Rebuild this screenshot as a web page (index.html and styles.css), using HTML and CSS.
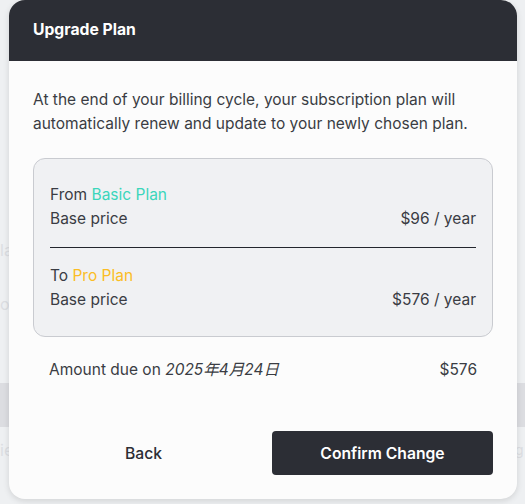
FILE: index.html
```html
<!DOCTYPE html>
<html>
<head>
<meta charset="utf-8">
<link rel="stylesheet" href="styles.css">
</head>
<body>
<div class="backdrop">
  <div class="bg-text bg-t1">la</div>
  <div class="bg-text bg-t2">o</div>
  <div class="bg-band"></div>
  <div class="bg-text bg-t3">ie</div>
  <div class="bg-text bg-t4">g</div>
</div>
<div class="modal">
  <div class="modal-header">Upgrade Plan</div>
  <div class="modal-body">
    <p class="intro">At the end of your billing cycle, your subscription plan will automatically renew and update to your newly chosen plan.</p>
    <div class="summary">
      <div class="plan">
        <div class="row">From <span class="basic">Basic Plan</span></div>
        <div class="row split"><span>Base price</span><span>$96 / year</span></div>
      </div>
      <div class="divider"></div>
      <div class="plan">
        <div class="row">To <span class="pro">Pro Plan</span></div>
        <div class="row split"><span>Base price</span><span>$576 / year</span></div>
      </div>
    </div>
    <div class="due split"><span>Amount due on <em>2025年4月24日</em></span><span>$576</span></div>
  </div>
  <div class="modal-footer">
    <button class="btn btn-back">Back</button>
    <button class="btn btn-confirm">Confirm Change</button>
  </div>
</div>
</body>
</html>
```
FILE: styles.css
```css
* { box-sizing: border-box; }
html, body { margin: 0; padding: 0; }
body {
  width: 525px;
  height: 504px;
  overflow: hidden;
  background: #eef0f2;
  font-family: Inter, "Noto Sans CJK JP", sans-serif;
  position: relative;
}
.backdrop { position: absolute; inset: 0; }
.bg-text { position: absolute; color: #dcdee2; font-size: 16px; }
.bg-t1 { left: 0; top: 240px; }
.bg-t2 { left: 0; top: 294px; }
.bg-t3 { left: 0; top: 440px; }
.bg-t4 { left: 515px; top: 441px; font-size: 14px; }
.bg-band { position: absolute; left: 0; right: 0; top: 383px; height: 44px; background: #dcdde1; }
.modal {
  position: absolute;
  left: 9px;
  top: 0;
  width: 508px;
  height: 499px;
  background: #fcfcfc;
  border-radius: 16px;
  box-shadow: 0 2px 6px rgba(0,0,0,0.12);
  overflow: hidden;
  display: flex;
  flex-direction: column;
}
.modal-header {
  background: #2c2e35;
  color: #fff;
  font-weight: 700;
  font-size: 15.7px;
  height: 61px;
  padding: 20px 24px 0;
  line-height: 20px;
}
.modal-body { padding: 27px 24px 0; color: #3a3c43; font-size: 15.5px; }
.intro { margin: 0; line-height: 24px; }
.summary {
  margin-top: 22px;
  background: #f0f1f3;
  border: 1px solid #c9cbd0;
  border-radius: 12px;
  padding: 24px 16px 24px;
}
.row { line-height: 24px; }
.split { display: flex; justify-content: space-between; }
.basic { color: #3bd6bb; }
.pro { color: #fbbd24; }
.divider { height: 1px; background: #23262d; margin: 16px 0 16px; }
.due { padding: 21px 16px 0; line-height: 24px; }
.due em { font-style: italic; }
.modal-footer { margin-top: auto; padding: 0 24px 24px; display: flex; gap: 18px; }
.btn {
  flex: 1;
  height: 44px;
  border: none;
  border-radius: 4px;
  font-family: inherit;
  font-size: 15.7px;
  font-weight: 600;
  cursor: pointer;
}
.btn-back { background: transparent; color: #2c2e35; font-weight: 500; }
.btn-confirm { background: #2c2e35; color: #fff; }
```
